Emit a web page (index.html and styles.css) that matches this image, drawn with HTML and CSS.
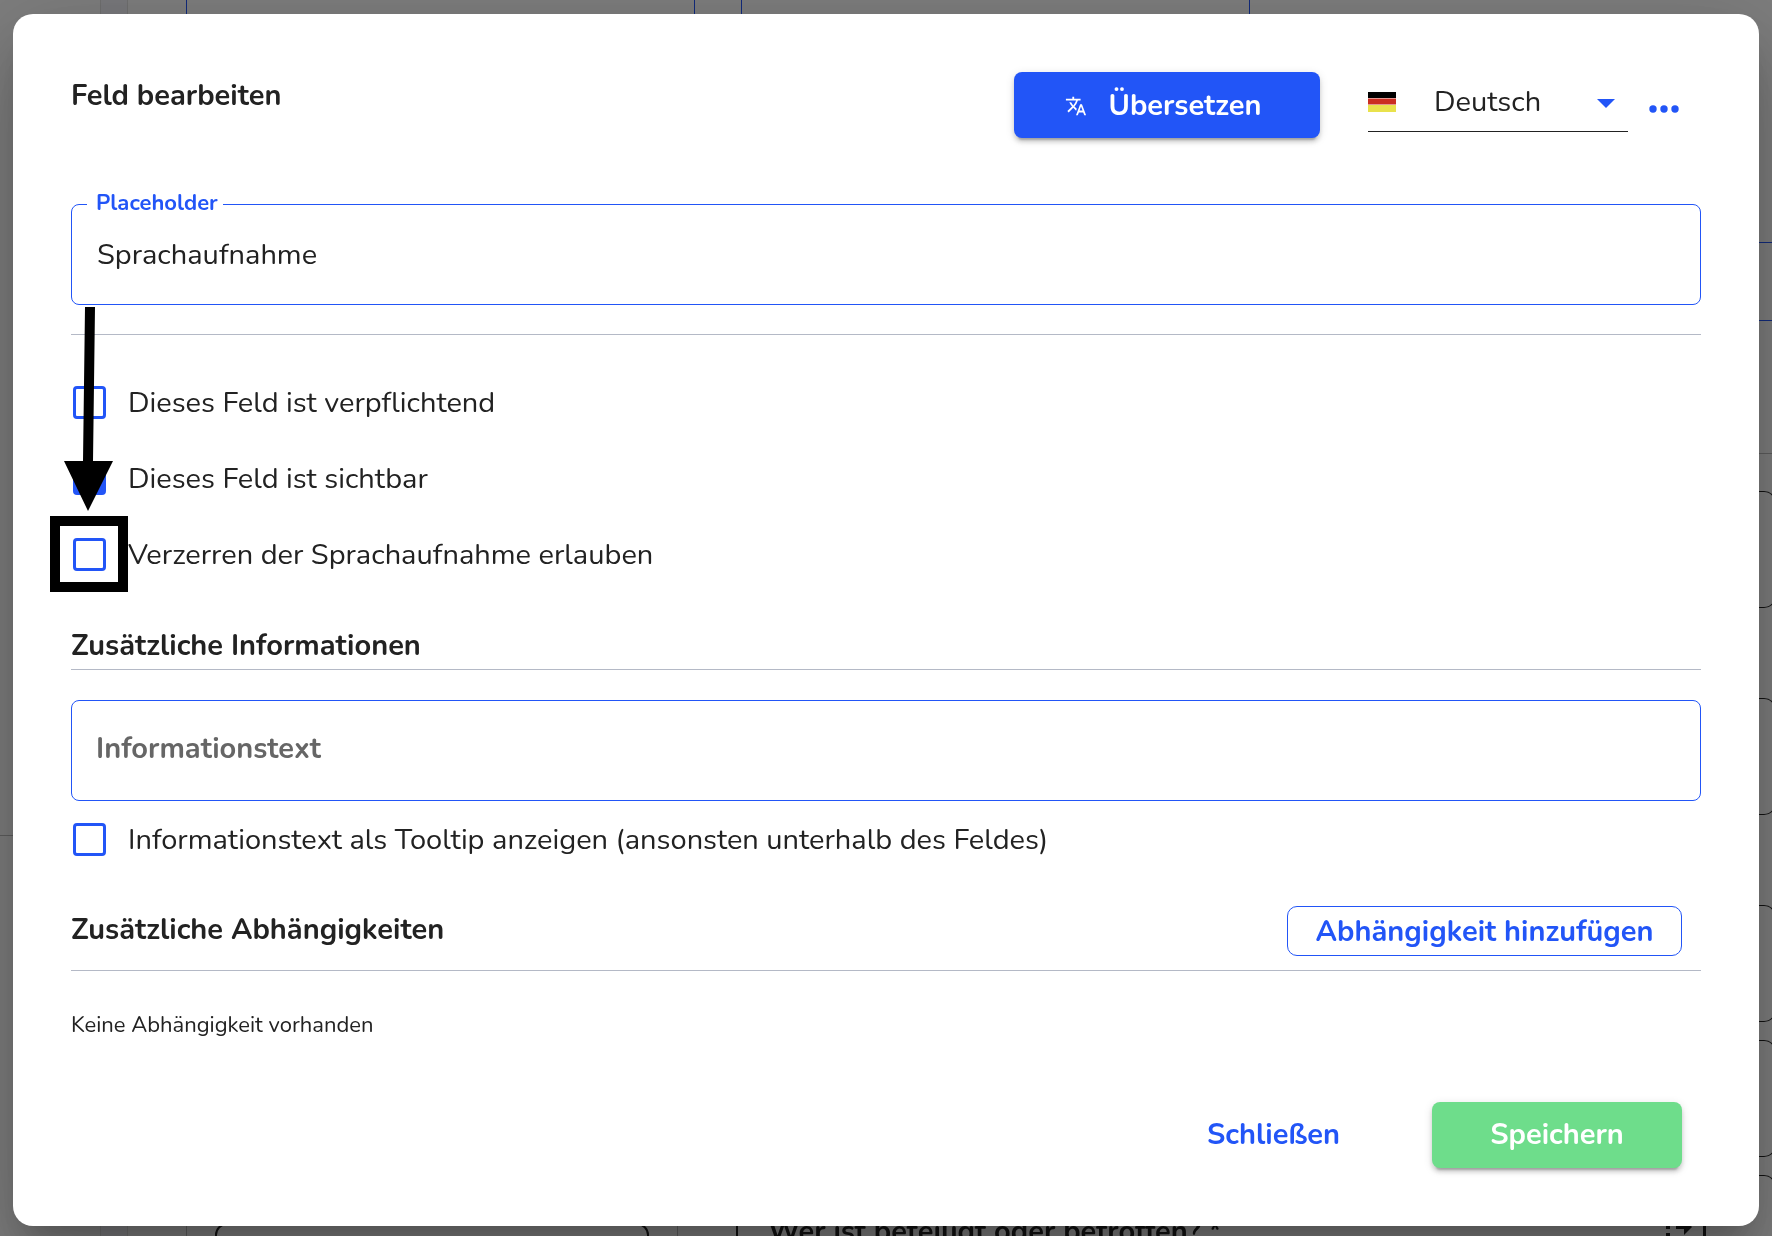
FILE: index.html
```html
<!DOCTYPE html>
<html lang="de">
<head>
<meta charset="utf-8">
<meta name="viewport" content="width=device-width, initial-scale=1">
<title>Feld bearbeiten</title>
<link rel="stylesheet" href="styles.css">
</head>
<body>
<div class="page" aria-hidden="true">
  <div class="page-nav"><div class="nav-line"></div></div>
  <div class="page-rail"></div>
  <div class="page-main">
    <div class="page-top">
      <div class="top-box"></div>
      <div class="top-box"></div>
    </div>
    <div class="page-bottom">
      <div class="bottom-card"><div class="bottom-input"></div></div>
      <div class="bottom-question">
        <span class="question-text">Wer ist beteiligt oder betroffen? *</span>
        <svg class="question-icon" viewBox="0 0 28 28" width="28" height="28"><path d="M1 7h4v4H1zM1 15h4v4H1zM11 7h8V1l8 8-8 8v-6h-8z" fill="#222"/></svg>
      </div>
    </div>
  </div>
  <div class="page-side">
    <div class="side-box side-box-blue"></div>
    <div class="side-line"></div>
    <div class="side-box"></div>
    <div class="side-box side-box-far"></div>
    <div class="side-box side-box-far"></div>
    <div class="side-box side-box-near"></div>
    <div class="side-box side-box-near"></div>
  </div>
</div>

<div class="backdrop">
  <main class="dialog" role="dialog" aria-labelledby="dialog-title">
    <header class="dialog-header">
      <h1 class="title" id="dialog-title">Feld bearbeiten</h1>
      <button class="button button-primary" type="button">
        <svg class="translate-icon" viewBox="0 0 24 24" width="22" height="22" aria-hidden="true"><path fill="currentColor" d="M12.87 15.07l-2.54-2.51.03-.03A17.52 17.52 0 0 0 14.07 6H17V4h-7V2H8v2H1v2h11.17C11.5 7.92 10.44 9.75 9 11.35 8.07 10.32 7.3 9.19 6.69 8h-2c.73 1.63 1.73 3.17 2.98 4.56l-5.09 5.02L4 19l5-5 3.11 3.11.76-2.04zM18.5 10h-2L12 22h2l1.12-3h4.75L21 22h2l-4.5-12zm-2.62 7l1.62-4.33L19.12 17h-3.24z"/></svg>
        Übersetzen
      </button>
      <div class="language">
        <svg class="flag" viewBox="0 0 28 20" width="28" height="20" aria-hidden="true"><path fill="#000" d="M0 0h28v7H0z"/><path fill="#cb2e22" d="M0 6h28v7H0z"/><path fill="#e9e24c" d="M0 13h28v7H0z"/><path fill="#fff" opacity=".5" d="M0 6h28v1H0zM0 12h28v1H0z"/></svg>
        <select class="language-select" aria-label="Sprache"><option>Deutsch</option></select>
        <svg class="caret" viewBox="0 0 18 9" width="18" height="9" aria-hidden="true"><path fill="#2255f7" d="M0 0h18L9 9z"/></svg>
      </div>
      <button class="more" type="button" aria-label="Mehr">
        <svg viewBox="0 0 32 8" width="32" height="8" aria-hidden="true"><g fill="#2255f7"><circle cx="5" cy="4" r="3.7"/><circle cx="16" cy="4" r="3.7"/><circle cx="27" cy="4" r="3.7"/></g></svg>
      </button>
    </header>

    <div class="field">
      <label class="field-label" for="placeholder">Placeholder</label>
      <input class="field-input" id="placeholder" type="text" value="Sprachaufnahme">
    </div>

    <hr class="divider divider-spaced">

    <div class="options">
      <label class="option"><input class="checkbox" type="checkbox"><span class="option-text">Dieses Feld ist verpflichtend</span></label>
      <label class="option"><input class="checkbox" type="checkbox" checked><span class="option-text">Dieses Feld ist sichtbar</span></label>
      <label class="option"><input class="checkbox" type="checkbox"><span class="option-text">Verzerren der Sprachaufnahme erlauben</span></label>
      <svg class="pointer" viewBox="0 0 78 286" width="78" height="286" aria-hidden="true"><path d="M35 1h10l-2 154h20L38 205 14 155h19z"/><path d="M0 210h78v76H0zm10 10v56h58v-56z" fill-rule="evenodd"/></svg>
    </div>

    <h2 class="title info-title">Zusätzliche Informationen</h2>
    <hr class="divider">
    <div class="field info-field">
      <input class="field-input" type="text" placeholder="Informationstext" aria-label="Informationstext">
    </div>
    <label class="option"><input class="checkbox" type="checkbox"><span class="option-text">Informationstext als Tooltip anzeigen (ansonsten unterhalb des Feldes)</span></label>

    <div class="section-head">
      <h2 class="title">Zusätzliche Abhängigkeiten</h2>
      <button class="button button-outline" type="button">Abhängigkeit hinzufügen</button>
    </div>
    <hr class="divider">
    <p class="empty">Keine Abhängigkeit vorhanden</p>

    <footer class="actions">
      <button class="button button-text" type="button">Schließen</button>
      <button class="button button-save" type="submit">Speichern</button>
    </footer>
  </main>
</div>
</body>
</html>
```
FILE: styles.css
```css
* { box-sizing: border-box; }

body {
  margin: 0;
  background: #fafafa;
  color: #222;
  font-family: Nunito, "Open Sans", "Noto Sans", sans-serif;
  font-size: 29px;
  line-height: 36px;
}

/* Form editor behind the dialog */
.page {
  position: fixed;
  inset: 0;
  display: flex;
  overflow: hidden;
}
.page-nav { width: 100px; }
.nav-line { height: 836px; border-bottom: 1px solid #bbb; }
.page-rail {
  width: 28px;
  background: #f0f0f6;
  border: solid #ddd;
  border-width: 0 1px;
}
.page-main {
  flex: 1;
  display: flex;
  flex-direction: column;
  justify-content: space-between;
}
.page-top { display: flex; gap: 46px; padding-left: 58px; }
.top-box {
  width: 509px;
  height: 60px;
  border: solid #2255f7;
  border-width: 0 1px 1px;
}
.page-bottom { display: flex; gap: 30px; height: 18px; padding-left: 58px; }
.bottom-card {
  width: 492px;
  height: 80px;
  padding: 5px 28px;
  border: solid #bbb;
  border-width: 0 1px;
}
.bottom-input { height: 60px; border: 2px solid #222; border-radius: 12px; }
.bottom-question {
  display: flex;
  flex: 1;
  justify-content: space-between;
  align-items: flex-start;
  margin-left: 28px;
  padding-left: 30px;
  padding-right: 10px;
  border-left: 2px solid #222;
  border-right: 3px solid #222;
  font-weight: 700;
}
.question-text { line-height: 28px; }
.page-side { flex: none; width: 70px; margin-right: -4px; padding-top: 242px; }
.side-box {
  height: 117px;
  margin-top: 37px;
  border: solid #222;
  border-width: 1px 1px 1px 0;
  border-radius: 0 12px 12px 0;
}
.side-box-blue { height: 79px; margin: 0; border: solid #2255f7; border-width: 1px 0; border-radius: 0; }
.side-line { margin-top: 132px; border-top: 1px solid #bbb; }
.side-box-far { margin-top: 90px; }
.side-box-near { margin-top: 18px; }

/* Dialog */
.backdrop {
  position: relative;
  min-height: 100vh;
  padding: 14px 13px 10px;
  background: rgba(0, 0, 0, .5);
}
.dialog {
  min-height: calc(100vh - 24px);
  padding: 58px;
  background: #fff;
  border-radius: 20px;
  box-shadow: 0 22px 30px -14px rgba(0, 0, 0, .2), 0 48px 76px 6px rgba(0, 0, 0, .14), 0 18px 92px 16px rgba(0, 0, 0, .12);
}
.dialog-header {
  display: flex;
  align-items: flex-start;
  padding-right: 21px;
  margin-bottom: 58px;
}
.title { margin: 0; font-size: 29px; line-height: 36px; font-weight: 700; }
.dialog-header .title { flex: 1; padding-top: 6px; }

.button {
  display: flex;
  align-items: center;
  justify-content: center;
  height: 66px;
  padding: 0 52px;
  border: 0;
  border-radius: 8px;
  background: none;
  color: #2255f7;
  font: inherit;
  font-weight: 700;
}
.button-primary, .button-save {
  color: #fff;
  box-shadow: 0 6px 2px -4px rgba(0, 0, 0, .2), 0 4px 4px rgba(0, 0, 0, .14), 0 2px 10px rgba(0, 0, 0, .12);
}
.button-primary { width: 306px; gap: 22px; padding: 2px 56px 0 48px; background: #2255f7; }
.button-save { width: 250px; background: #6edd8b; }
.button-outline { width: 395px; height: 50px; padding: 2px 24px 0; border: 1px solid #2255f7; border-radius: 10px; }

.language {
  display: flex;
  align-items: center;
  width: 260px;
  height: 60px;
  margin-left: 48px;
  padding-right: 13px;
  border-bottom: 1px solid #222;
}
.language-select {
  flex: 1;
  height: 58px;
  margin-left: 38px;
  padding: 0;
  appearance: none;
  border: 0;
  background: none;
  color: inherit;
  font: inherit;
}
.caret { margin-top: 4px; }
.more {
  display: flex;
  align-items: center;
  height: 74px;
  padding: 0;
  margin-left: 20px;
  border: 0;
  background: none;
}

.field { position: relative; }
.field-input {
  display: block;
  width: 100%;
  height: 101px;
  padding: 0 25px;
  border: 1px solid #2255f7;
  border-radius: 8px;
  background: #fff;
  color: inherit;
  font: inherit;
}
.info-field .field-input { padding: 0 24px 4px; }
.field-input::placeholder { color: #666; font-weight: 700; opacity: 1; }
.field-label {
  position: absolute;
  top: -13px;
  left: 16px;
  padding: 0 5px 0 9px;
  background: #fff;
  color: #2255f7;
  font-size: 22px;
  line-height: 24px;
  font-weight: 700;
}
.divider { margin: 0; border: 0; border-top: 1px solid #b4b9c6; }
.divider-spaced { margin: 29px 0; }

.options { position: relative; margin-bottom: 36px; }
.option { display: flex; align-items: center; gap: 22px; height: 76px; padding-left: 2px; }
.option-text { padding-top: 2px; }
.checkbox {
  flex: none;
  width: 33px;
  height: 33px;
  margin: 0;
  appearance: none;
  border: 3px solid #2255f7;
  border-radius: 4px;
}
.checkbox:checked { background: #2255f7; }
/* Arrow and frame that point out the distortion option */
.pointer { position: absolute; left: -21px; bottom: 0; }

.info-title { margin-bottom: 5px; }
.info-field { margin-top: 30px; }
.section-head {
  display: flex;
  align-items: center;
  justify-content: space-between;
  margin: 29px 0 14px;
  padding-right: 19px;
}
.section-head .title { padding-bottom: 2px; }
.empty { margin: 40px 0 63px; font-size: 22px; line-height: 28px; }
.actions { display: flex; justify-content: flex-end; gap: 40px; padding-right: 19px; }
```
